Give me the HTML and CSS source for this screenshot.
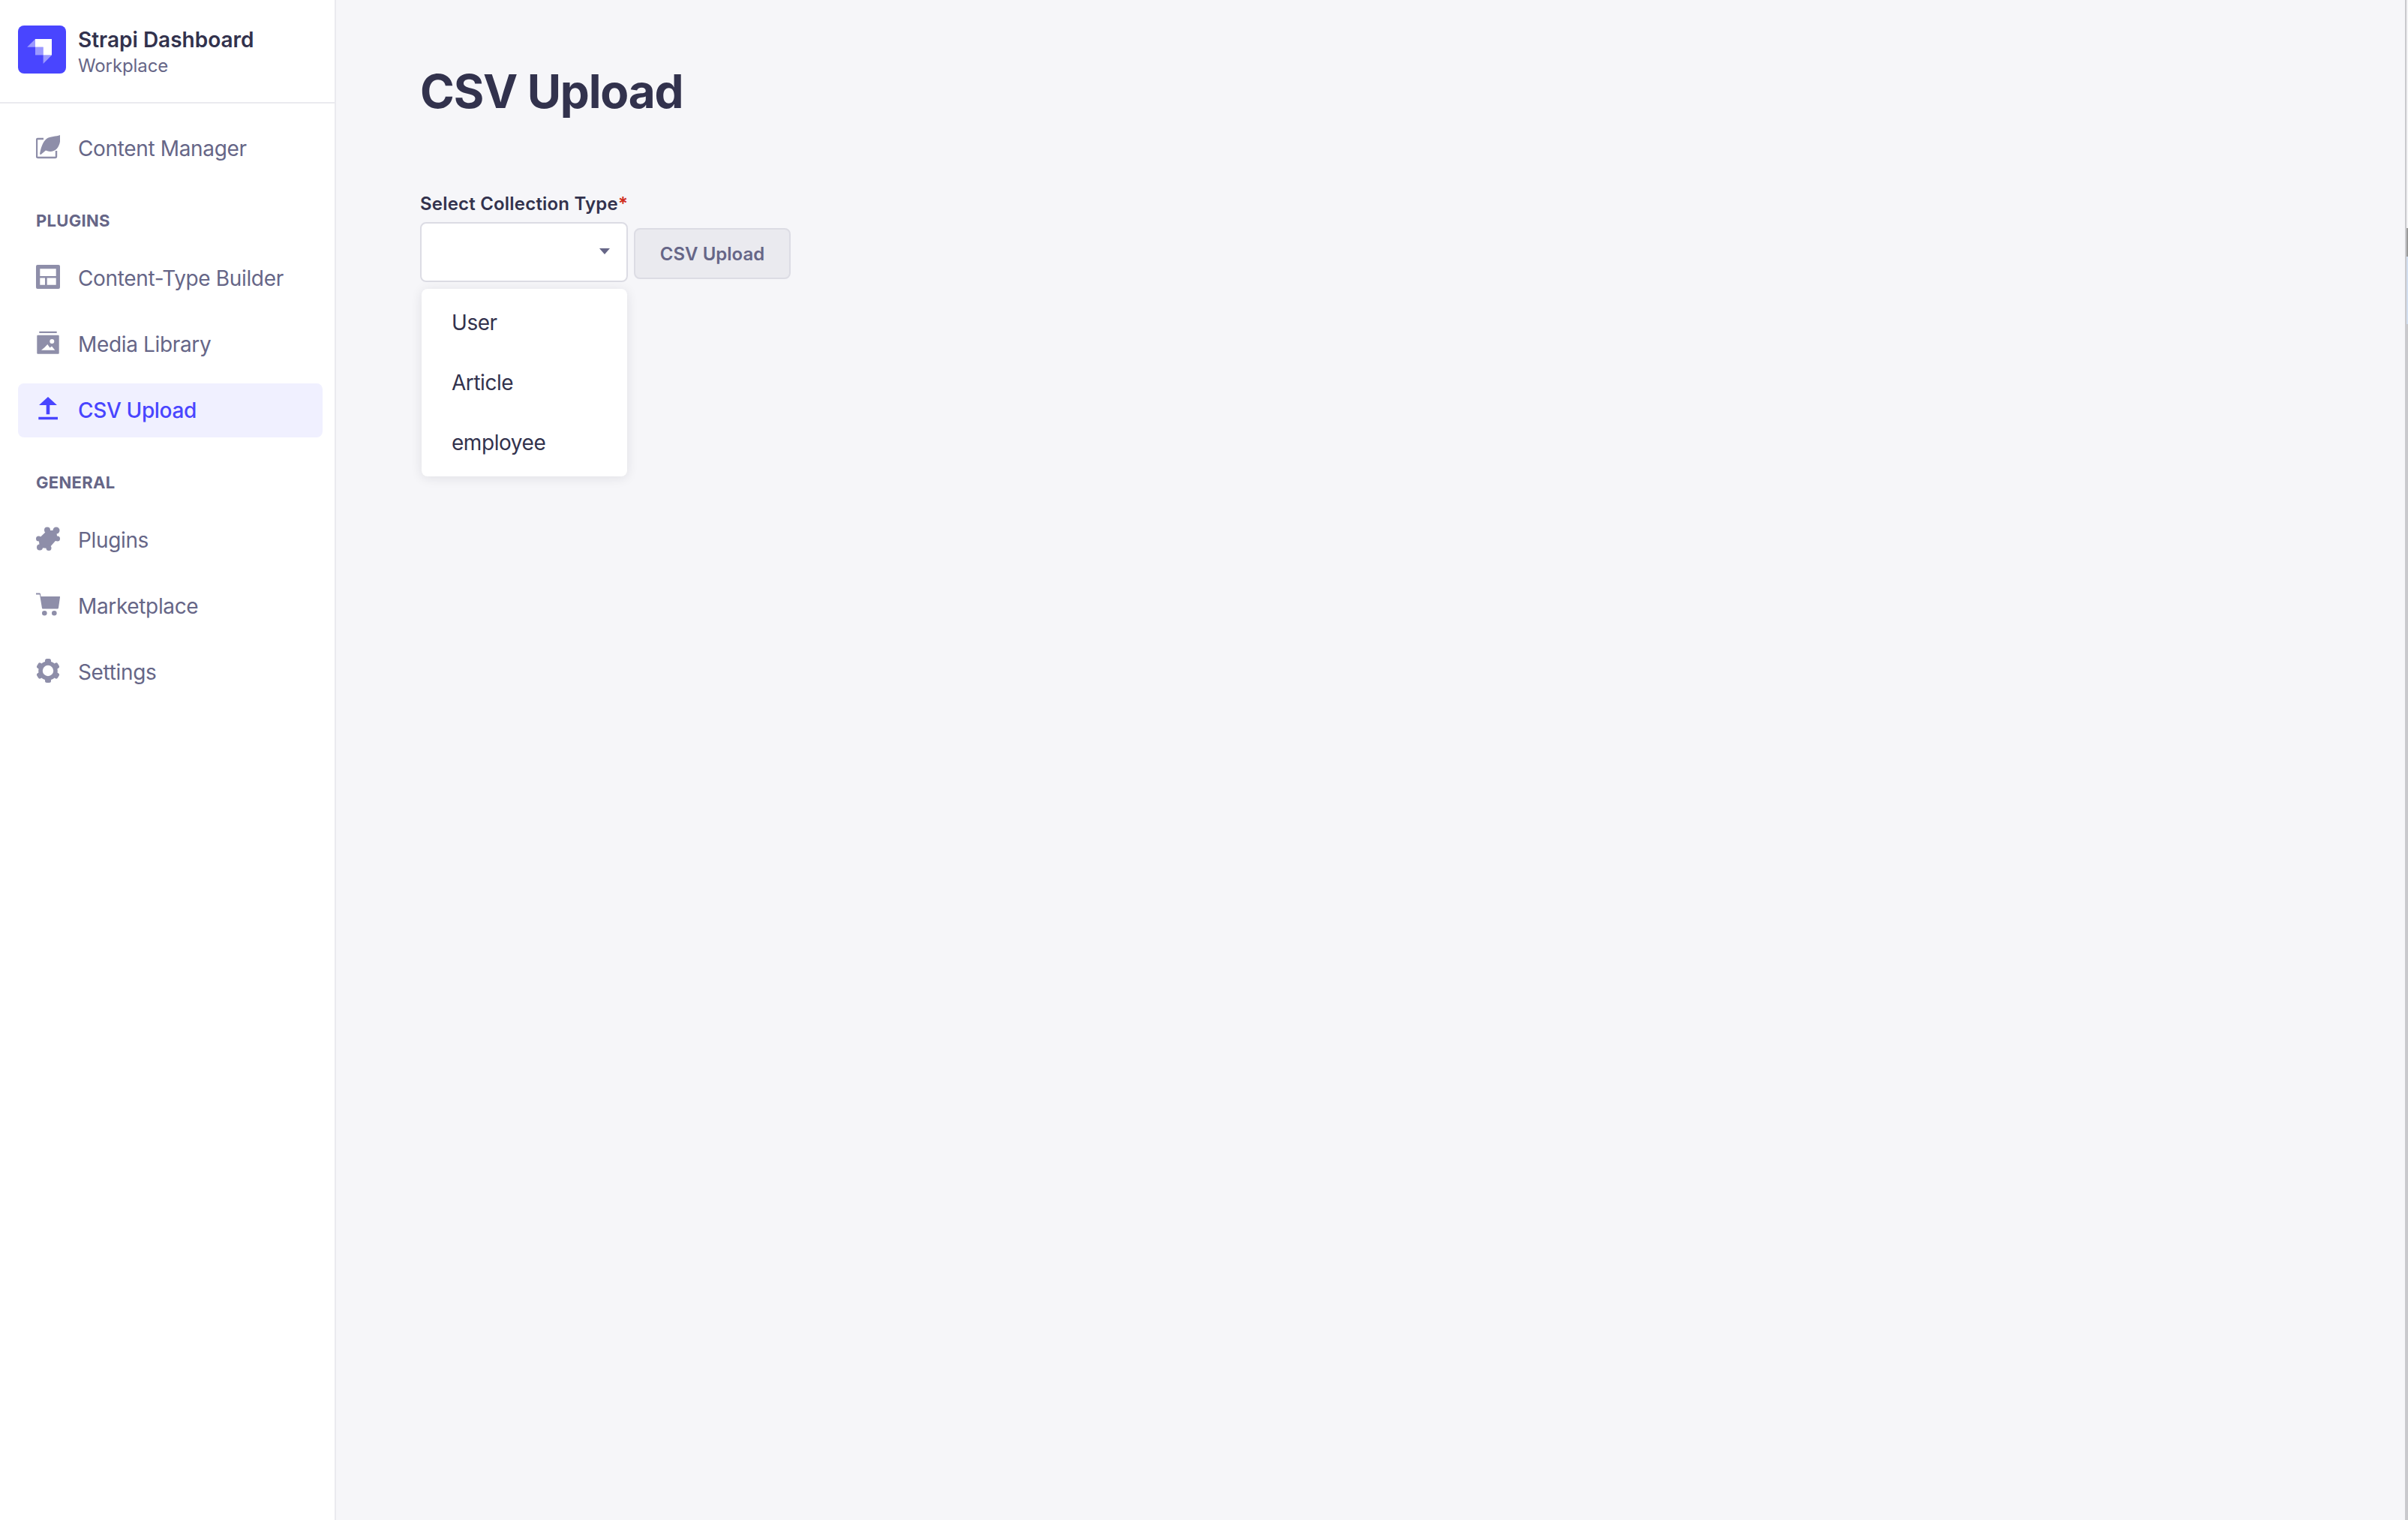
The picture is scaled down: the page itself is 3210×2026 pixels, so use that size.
FILE: index.html
```html
<!DOCTYPE html>
<html lang="en">

<head>
  <meta charset="UTF-8" />
  <title>CSV Upload</title>
  <link rel="stylesheet" href="styles.css">
</head>

<body>
  <div class="app">
    <nav class="sidebar">
      <div class="brand">
        <div class="brand-logo">
          <svg viewBox="0 0 32 32" width="64" height="64">
            <path d="M22.500 9H11.500v5.400h5.300v5.300h5.700z" fill="#fff" />
            <path d="M11.500 9v5.400H6.100z" fill="#fff" fill-opacity=".45" />
            <path d="M11.500 14.400h5.300v5.300h-5.300z" fill="#fff" fill-opacity=".45" />
            <path d="M16.800 19.700h5.700l-5.700 5.800z" fill="#fff" fill-opacity=".45" />
          </svg>
        </div>
        <div class="brand-text">
          <div class="brand-name">Strapi Dashboard</div>
          <div class="brand-sub">Workplace</div>
        </div>
      </div>

      <div class="nav-list">
        <a class="nav-item">
          <svg class="nav-icon" viewBox="0 0 32 32">
            <path d="M10 5H2.500A1.500 1.500 0 0 0 1 6.500V28.500A1.500 1.500 0 0 0 2.500 30H25.500A1.500 1.500 0 0 0 27 28.500V21" fill="none" stroke="currentColor" stroke-width="2.400" />
            <path d="M5 25.500C6 18 9 9 14 5C19 1.500 27 2 32 0C33 8 31.500 14 27.500 18.500C24 22 18 23 13 20.500L6.500 26z" fill="currentColor" />
          </svg>
          <span>Content Manager</span>
        </a>

        <div class="nav-label">Plugins</div>
        <a class="nav-item">
          <svg class="nav-icon" viewBox="0 0 32 32">
            <path fill-rule="evenodd" d="M2 0h28a2 2 0 0 1 2 2v28a2 2 0 0 1-2 2H2a2 2 0 0 1-2-2V2a2 2 0 0 1 2-2zM5.300 5.300V15H26.700V5.300zM5.300 17.500V26.700H12V17.500zM14.700 17.500V26.700H26.700V17.500z" fill="currentColor" />
          </svg>
          <span>Content-Type Builder</span>
        </a>
        <a class="nav-item">
          <svg class="nav-icon" viewBox="0 0 32 32">
            <path d="M4.300 .7H27.700V3H4.300z" fill="currentColor" />
            <path fill-rule="evenodd" d="M2.300 5.700H29.700a1 1 0 0 1 1 1V29.700a1 1 0 0 1-1 1H2.300a1 1 0 0 1-1-1V6.700a1 1 0 0 1 1-1zM18.300 14a3 3 0 1 0 6 0a3 3 0 1 0-6 0zM7 25.700H25.300L21 20.500 18.500 22.500 15.300 18 11.500 22z" fill="currentColor" />
          </svg>
          <span>Media Library</span>
        </a>
        <a class="nav-item active">
          <svg class="nav-icon" viewBox="0 0 32 32">
            <path d="M16 0L28 11H18.300V23.300H13.700V11H4zM3.300 26.700H29V30.300H3.300z" fill="currentColor" />
          </svg>
          <span>CSV Upload</span>
        </a>

        <div class="nav-label">General</div>
        <a class="nav-item">
          <svg class="nav-icon" viewBox="0 0 32 32">
            <path d="M15 5L27 5L28.500 16L17 29L5 28L3.500 16z" fill="currentColor" />
            <circle cx="15" cy="4.500" r="4" fill="currentColor" />
            <circle cx="27" cy="5" r="4.500" fill="currentColor" />
            <circle cx="28.500" cy="16" r="3.500" fill="currentColor" />
            <circle cx="3.500" cy="16" r="3.500" fill="currentColor" />
            <circle cx="5" cy="27.500" r="4" fill="currentColor" />
            <circle cx="17" cy="28.500" r="3.500" fill="currentColor" />
          </svg>
          <span>Plugins</span>
        </a>
        <a class="nav-item">
          <svg class="nav-icon" viewBox="0 0 32 32">
            <path d="M0 .5H4.500C5.500 .5 6 1.200 6.100 2L6.500 5H31.500C32 5 32 5.500 32 6L30 20C29.800 21 29.200 21.500 28.300 21.500H9.500C8.500 21.500 8 21 7.900 20L5 2.500H0z" fill="currentColor" />
            <circle cx="11.300" cy="27.300" r="3.300" fill="currentColor" />
            <circle cx="24.300" cy="27.300" r="3.300" fill="currentColor" />
          </svg>
          <span>Marketplace</span>
        </a>
        <a class="nav-item">
          <svg class="nav-icon" viewBox="0 0 32 32">
            <circle cx="16" cy="16" r="10" fill="none" stroke="currentColor" stroke-width="5.600" />
            <g fill="currentColor">
              <rect x="12" y="0" width="8" height="6" rx="2.500" />
              <rect x="12" y="0" width="8" height="6" rx="2.500" transform="rotate(60 16 16)" />
              <rect x="12" y="0" width="8" height="6" rx="2.500" transform="rotate(120 16 16)" />
              <rect x="12" y="0" width="8" height="6" rx="2.500" transform="rotate(180 16 16)" />
              <rect x="12" y="0" width="8" height="6" rx="2.500" transform="rotate(240 16 16)" />
              <rect x="12" y="0" width="8" height="6" rx="2.500" transform="rotate(300 16 16)" />
            </g>
          </svg>
          <span>Settings</span>
        </a>
      </div>
    </nav>

    <main class="content">
      <h1>CSV Upload</h1>
      <div class="field-label">Select Collection Type<span class="required">*</span></div>
      <div class="field-row">
        <div class="select-wrap">
          <div class="select">
            <svg class="caret" viewBox="0 0 14 8" width="14" height="8">
              <path d="M0 0h14L7 8z" fill="currentColor" />
            </svg>
          </div>
          <ul class="menu">
            <li>User</li>
            <li>Article</li>
            <li>employee</li>
          </ul>
        </div>
        <button class="upload-btn" type="button" disabled>CSV Upload</button>
      </div>
    </main>

    <div class="window-edge">
      <div class="edge-light"></div>
      <div class="edge-dark"></div>
      <div class="edge-blue"></div>
    </div>
  </div>
</body>

</html>
```
FILE: styles.css
```css
* {
  margin: 0;
  padding: 0;
  box-sizing: border-box;
}

body {
  height: 100vh;
  overflow: hidden;
  font-family: Inter, "Noto Sans", sans-serif;
  background: #f6f6f9;
  color: #32324d;
}

.app {
  display: flex;
  height: 100%;
}

.sidebar {
  width: 448px;
  flex-shrink: 0;
  background: #fff;
  border-right: 2px solid #eaeaef;
}

.brand {
  display: flex;
  align-items: center;
  gap: 16px;
  height: 138px;
  padding: 0 24px;
  border-bottom: 2px solid #eaeaef;
}

.brand-logo {
  width: 64px;
  height: 64px;
  margin-bottom: 4px;
  border-radius: 8px;
  background: #4945ff;
}

.brand-logo svg {
  display: block;
}

.brand-text {
  margin-top: 2px;
}

.brand-name {
  font-size: 28px;
  font-weight: 600;
  line-height: 36px;
  color: #32324d;
}

.brand-sub {
  margin-top: 1px;
  font-size: 24px;
  line-height: 32px;
  letter-spacing: -0.1px;
  color: #666687;
}

.nav-list {
  padding: 24px 16px 0 24px;
}

.nav-item {
  display: flex;
  align-items: center;
  gap: 24px;
  height: 72px;
  margin-bottom: 16px;
  padding: 0 24px;
  border-radius: 8px;
  font-size: 28px;
  letter-spacing: -0.35px;
  color: #666687;
}

.nav-item:last-child {
  margin-bottom: 0;
}

.nav-icon {
  width: 32px;
  height: 32px;
  margin-top: -4px;
  flex-shrink: 0;
  color: #8e8ea9;
}

.nav-item.active {
  background: #f0f0ff;
  color: #4945ff;
  font-weight: 500;
}

.nav-item.active .nav-icon {
  color: #4945ff;
}

.nav-label {
  padding: 30px 24px 27px;
  font-size: 22px;
  font-weight: 700;
  line-height: 28px;
  letter-spacing: 0.3px;
  text-transform: uppercase;
  color: #666687;
}

.content {
  flex: 1;
  padding: 80px 112px;
}

h1 {
  margin-bottom: 92px;
  font-size: 62px;
  font-weight: 650;
  line-height: 84px;
  letter-spacing: -1.2px;
  color: #32324d;
}

.field-label {
  margin-bottom: 8px;
  font-size: 24px;
  font-weight: 600;
  line-height: 32px;
  letter-spacing: 0.2px;
  color: #32324d;
}

.required {
  color: #d02b20;
}

.field-row {
  display: flex;
  align-items: flex-start;
  gap: 8px;
}

.select-wrap {
  position: relative;
  width: 277px;
}

.select {
  display: flex;
  align-items: center;
  justify-content: flex-end;
  height: 80px;
  padding-right: 22px;
  background: #fff;
  border: 2px solid #dcdce4;
  border-radius: 8px;
  color: #666687;
}

.caret {
  margin-top: -2px;
}

.menu {
  position: absolute;
  top: 89px;
  left: 2px;
  right: 1px;
  padding: 5px 0;
  list-style: none;
  background: #fff;
  border-radius: 8px;
  box-shadow: 0 2px 15px rgba(33, 33, 52, 0.1);
}

.menu li {
  height: 80px;
  padding: 0 40px;
  font-size: 28px;
  line-height: 80px;
  letter-spacing: -0.45px;
  color: #32324d;
}

.upload-btn {
  width: 209px;
  height: 68px;
  margin-top: 8px;
  background: #eaeaef;
  border: 2px solid #dcdce4;
  border-radius: 8px;
  font-family: inherit;
  font-size: 24px;
  font-weight: 600;
  color: #666687;
}

/* screen edge of the captured window */
.window-edge {
  display: flex;
  flex-direction: column;
  align-items: flex-end;
  width: 4px;
  flex-shrink: 0;
  background: #c9c9cd;
}

.edge-light {
  width: 2px;
  height: 304px;
  background: #f4f4f6;
}

.edge-dark {
  width: 2px;
  height: 38px;
  background: #9a9a9a;
}

.edge-blue {
  width: 2px;
  height: 90px;
  background: #d3dff0;
}
```
